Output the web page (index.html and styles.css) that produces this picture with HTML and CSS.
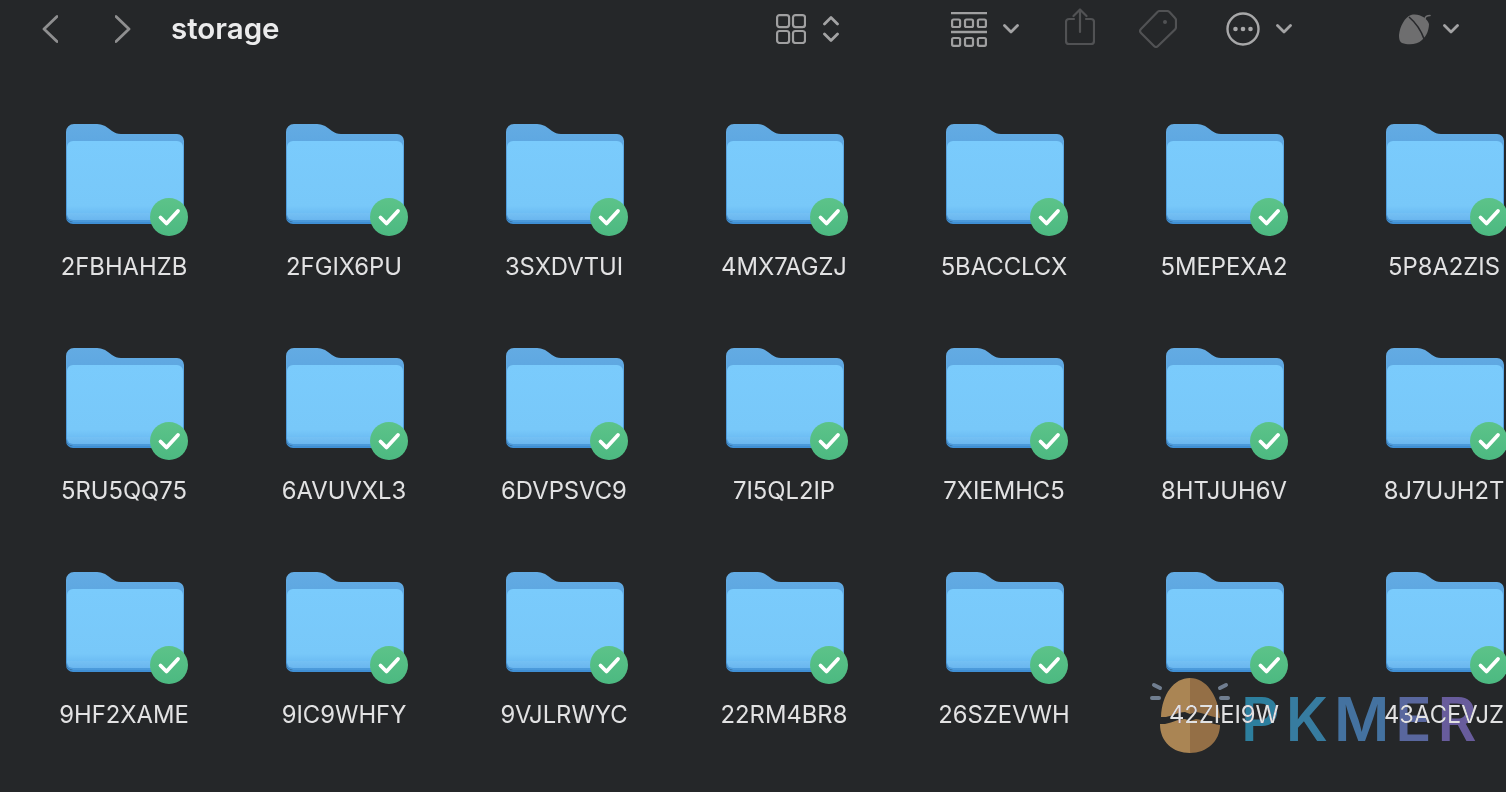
FILE: index.html
```html
<!DOCTYPE html>
<html lang="en">
<head>
  <meta charset="UTF-8" />
  <title>storage</title>
  <link rel="stylesheet" href="styles.css">
</head>
<body>

  <!-- shared icons -->
  <svg class="defs" aria-hidden="true">
    <defs>
      <linearGradient id="folderBack" x1="0" y1="0" x2="0" y2="1">
        <stop offset="0" stop-color="#63abe3"/>
        <stop offset="1" stop-color="#4b9adb"/>
      </linearGradient>
      <linearGradient id="folderFront" x1="0" y1="0" x2="0" y2="1">
        <stop offset="0" stop-color="#7acbfc"/>
        <stop offset="0.82" stop-color="#78c8f9"/>
        <stop offset="1" stop-color="#63b3ef"/>
      </linearGradient>
      <linearGradient id="checkFill" x1="0" y1="0" x2="0" y2="1">
        <stop offset="0" stop-color="#5cc389"/>
        <stop offset="1" stop-color="#4cb981"/>
      </linearGradient>
      <symbol id="folder" viewBox="0 0 118 100">
        <path d="M0 8a8 8 0 0 1 8-8h21c6 0 9 1 13 4l4 3c3 2 5 3 9 3h56a7 7 0 0 1 7 7v74a7 7 0 0 1-7 7H7a7 7 0 0 1-7-7z" fill="url(#folderBack)"/>
        <path d="M1 23a6 6 0 0 1 6-6h104a6 6 0 0 1 6 6v67a6 6 0 0 1-6 6H7a6 6 0 0 1-6-6z" fill="url(#folderFront)"/>
        <path d="M1 89h116v1a6 6 0 0 1-6 6H7a6 6 0 0 1-6-6z" fill="#fff" opacity="0.05"/>
        <path d="M0 91a7 7 0 0 0 7 7h104a7 7 0 0 0 7-7v2a7 7 0 0 1-7 7H7a7 7 0 0 1-7-7z" fill="#3f8fd4"/>
      </symbol>
      <symbol id="check" viewBox="0 0 38 38">
        <circle cx="19" cy="19" r="19" fill="url(#checkFill)"/>
        <path d="M10.500 19.500l6 6L28 13" fill="none" stroke="#fff" stroke-width="3.800" stroke-linecap="round" stroke-linejoin="round"/>
      </symbol>
      <symbol id="chevron" viewBox="0 0 16 10">
        <path d="M1.500 1.500L8 8l6.500-6.500" fill="none" stroke="#a3a3a4" stroke-width="2.800" stroke-linecap="round" stroke-linejoin="round"/>
      </symbol>
    </defs>
  </svg>

  <header class="toolbar">
    <svg class="nav-back" width="16" height="28" viewBox="0 0 16 28"><path d="M15 1.500L2 14l13 12.500" fill="none" stroke="#8f8f90" stroke-width="2.800" stroke-linecap="round" stroke-linejoin="round"/></svg>
    <svg class="nav-forward" width="16" height="28" viewBox="0 0 16 28"><path d="M1 1.500L14 14 1 26.500" fill="none" stroke="#8f8f90" stroke-width="2.800" stroke-linecap="round" stroke-linejoin="round"/></svg>
    <h1 class="title">storage</h1>

    <svg class="view-icon" width="30" height="30" viewBox="0 0 30 30" fill="none" stroke="#a0a0a1" stroke-width="2.200">
      <rect x="1.100" y="1.100" width="12" height="12" rx="2.500"/><rect x="17" y="1.100" width="12" height="12" rx="2.500"/>
      <rect x="1.100" y="17" width="12" height="12" rx="2.500"/><rect x="17" y="17" width="12" height="12" rx="2.500"/>
    </svg>
    <svg class="view-sort" width="16" height="28" viewBox="0 0 16 28" fill="none" stroke="#a3a3a4" stroke-width="2.800" stroke-linecap="round" stroke-linejoin="round">
      <path d="M1.500 9L8 2.500l6.500 6.500"/><path d="M1.500 19L8 25.500l6.500-6.500"/>
    </svg>

    <svg class="group-icon" width="36" height="35" viewBox="0 0 36 35" fill="none" stroke="#a0a0a1" stroke-width="2.200">
      <path d="M0 1.100h36M0 20h36" stroke-width="2.400"/>
      <rect x="1.100" y="7.500" width="8" height="7.500" rx="1.500"/><rect x="14" y="7.500" width="8" height="7.500" rx="1.500"/><rect x="26.900" y="7.500" width="8" height="7.500" rx="1.500"/>
      <rect x="1.100" y="26" width="8" height="7.800" rx="1.500"/><rect x="14" y="26" width="8" height="7.800" rx="1.500"/><rect x="26.900" y="26" width="8" height="7.800" rx="1.500"/>
    </svg>
    <svg class="chev chev-group" width="16" height="10"><use href="#chevron"/></svg>

    <svg class="share-icon" width="30" height="38" viewBox="0 0 30 38" fill="none" stroke="#515254" stroke-width="2.200" stroke-linecap="round" stroke-linejoin="round">
      <path d="M9 11H4a3 3 0 0 0-3 3v19a3 3 0 0 0 3 3h22a3 3 0 0 0 3-3V14a3 3 0 0 0-3-3h-5"/>
      <path d="M15 24V2M8.500 8L15 1.500 21.500 8"/>
    </svg>
    <svg class="tag-icon" width="38" height="38" viewBox="0 0 38 38" fill="none" stroke="#515254" stroke-width="2.200" stroke-linejoin="round">
      <path d="M18 2.500Q19 1 21 1h7q1.500 0 2.500 1l5.500 6q1 1 1 2.500V17q0 1.500-1 2.500L19 36q-2 2-4 0L2 23q-2-2 0-4z"/>
      <circle cx="26" cy="12" r="2" fill="#515254" stroke="none"/>
    </svg>

    <svg class="more-icon" width="34" height="34" viewBox="0 0 34 34">
      <circle cx="17" cy="17" r="15.500" fill="none" stroke="#a8a8a9" stroke-width="2.400"/>
      <circle cx="9.500" cy="17" r="2.300" fill="#a8a8a9"/><circle cx="17" cy="17" r="2.300" fill="#a8a8a9"/><circle cx="24.500" cy="17" r="2.300" fill="#a8a8a9"/>
    </svg>
    <svg class="chev chev-more" width="16" height="10"><use href="#chevron"/></svg>

    <svg class="acorn-icon" width="32" height="31" viewBox="0 0 32 31">
      <path d="M12 1C6 3 1 12 0 21c0 5 1 7 3 8 6 2 15 2 20-3 5-4 7-11 7-16-2-6-10-11-18-9z" fill="#6e6e6f"/>
      <path d="M10 3c6 5 12 13 15.500 23" fill="none" stroke="#27282b" stroke-width="1.600"/>
      <path d="M26 5c0-2 2-3.500 5-3.500" fill="none" stroke="#6e6e6f" stroke-width="1.600" stroke-linecap="round"/>
    </svg>
    <svg class="chev chev-acorn" width="16" height="10"><use href="#chevron"/></svg>
  </header>

  <main class="grid">
    <div class="item"><span class="icon"><svg class="folder"><use href="#folder"/></svg><svg class="badge"><use href="#check"/></svg></span><span class="name">2FBHAHZB</span></div>
    <div class="item"><span class="icon"><svg class="folder"><use href="#folder"/></svg><svg class="badge"><use href="#check"/></svg></span><span class="name">2FGIX6PU</span></div>
    <div class="item"><span class="icon"><svg class="folder"><use href="#folder"/></svg><svg class="badge"><use href="#check"/></svg></span><span class="name">3SXDVTUI</span></div>
    <div class="item"><span class="icon"><svg class="folder"><use href="#folder"/></svg><svg class="badge"><use href="#check"/></svg></span><span class="name">4MX7AGZJ</span></div>
    <div class="item"><span class="icon"><svg class="folder"><use href="#folder"/></svg><svg class="badge"><use href="#check"/></svg></span><span class="name">5BACCLCX</span></div>
    <div class="item"><span class="icon"><svg class="folder"><use href="#folder"/></svg><svg class="badge"><use href="#check"/></svg></span><span class="name">5MEPEXA2</span></div>
    <div class="item"><span class="icon"><svg class="folder"><use href="#folder"/></svg><svg class="badge"><use href="#check"/></svg></span><span class="name">5P8A2ZIS</span></div>

    <div class="item"><span class="icon"><svg class="folder"><use href="#folder"/></svg><svg class="badge"><use href="#check"/></svg></span><span class="name">5RU5QQ75</span></div>
    <div class="item"><span class="icon"><svg class="folder"><use href="#folder"/></svg><svg class="badge"><use href="#check"/></svg></span><span class="name">6AVUVXL3</span></div>
    <div class="item"><span class="icon"><svg class="folder"><use href="#folder"/></svg><svg class="badge"><use href="#check"/></svg></span><span class="name">6DVPSVC9</span></div>
    <div class="item"><span class="icon"><svg class="folder"><use href="#folder"/></svg><svg class="badge"><use href="#check"/></svg></span><span class="name">7I5QL2IP</span></div>
    <div class="item"><span class="icon"><svg class="folder"><use href="#folder"/></svg><svg class="badge"><use href="#check"/></svg></span><span class="name">7XIEMHC5</span></div>
    <div class="item"><span class="icon"><svg class="folder"><use href="#folder"/></svg><svg class="badge"><use href="#check"/></svg></span><span class="name">8HTJUH6V</span></div>
    <div class="item"><span class="icon"><svg class="folder"><use href="#folder"/></svg><svg class="badge"><use href="#check"/></svg></span><span class="name">8J7UJH2T</span></div>

    <div class="item"><span class="icon"><svg class="folder"><use href="#folder"/></svg><svg class="badge"><use href="#check"/></svg></span><span class="name">9HF2XAME</span></div>
    <div class="item"><span class="icon"><svg class="folder"><use href="#folder"/></svg><svg class="badge"><use href="#check"/></svg></span><span class="name">9IC9WHFY</span></div>
    <div class="item"><span class="icon"><svg class="folder"><use href="#folder"/></svg><svg class="badge"><use href="#check"/></svg></span><span class="name">9VJLRWYC</span></div>
    <div class="item"><span class="icon"><svg class="folder"><use href="#folder"/></svg><svg class="badge"><use href="#check"/></svg></span><span class="name">22RM4BR8</span></div>
    <div class="item"><span class="icon"><svg class="folder"><use href="#folder"/></svg><svg class="badge"><use href="#check"/></svg></span><span class="name">26SZEVWH</span></div>
    <div class="item"><span class="icon"><svg class="folder"><use href="#folder"/></svg><svg class="badge"><use href="#check"/></svg></span><span class="name">42ZIEI9W</span></div>
    <div class="item"><span class="icon"><svg class="folder"><use href="#folder"/></svg><svg class="badge"><use href="#check"/></svg></span><span class="name">43ACEVJZ</span></div>
  </main>

  <!-- watermark sits over the last row -->
  <div class="watermark">
    <svg class="egg" width="84" height="78" viewBox="0 0 84 78">
      <path d="M13 41C14 18 26 2 42 2c0 12 0 27 0 36l-5-2c-8 0-15 6-24 5z" fill="#c2975c"/>
      <path d="M42 2c16 0 28 17 30 40-9-1-16-5-24-6l-6 2z" fill="#a87d4b"/>
      <path d="M12 48c9 1 17-5 25-5l5 2v32C25 77 12 66 12 48z" fill="#c2975c"/>
      <path d="M42 45l6-2c8 1 15 5 24 6 0 16-13 28-30 28z" fill="#a87d4b"/>
      <path d="M6 9l6 3M4 22h7M78 9l-6 3M80 22h-7" stroke="#7e8ea2" stroke-width="4" stroke-linecap="round"/>
    </svg>
    <span class="wm-text"><span class="wm-p">P</span><span class="wm-k">K</span><span class="wm-m">M</span><span class="wm-e">E</span><span class="wm-r">R</span></span>
  </div>

</body>
</html>
```

FILE: styles.css
```css
/* Reset and Base */
* {
  box-sizing: border-box;
  margin: 0;
  padding: 0;
}

body {
  position: relative;
  width: 1506px;
  height: 792px;
  overflow: hidden;
  background: #252729;
  font-family: Inter, 'Noto Sans', sans-serif;
  color: #e2e2e3;
}

.defs {
  position: absolute;
  width: 0;
  height: 0;
}

/* Toolbar */
.toolbar {
  display: flex;
  align-items: center;
  height: 58px;
  padding-left: 42px;
}

.toolbar svg {
  flex: none;
}

.nav-forward { margin-left: 57px; }

.title {
  width: 110px;
  margin-left: 40px;
  margin-bottom: 2px;
  font-size: 29.500px;
  font-weight: 600;
  color: #ebebec;
}

.view-icon { margin-left: 495px; }
.view-sort { margin-left: 17px; }
.group-icon { margin-left: 112px; }
.chev-group { margin-left: 16px; }
.share-icon { margin-left: 46px; margin-bottom: 4px; }
.tag-icon { margin-left: 44px; }
.more-icon { margin-left: 49px; }
.chev-more { margin-left: 16px; }
.acorn-icon { margin-left: 107px; }
.chev-acorn { margin-left: 12px; }

/* Folder grid */
.grid {
  display: grid;
  grid-template-columns: repeat(7, 220px);
  grid-auto-rows: 224px;
  padding: 66px 0 0 14px;
}

.item {
  display: flex;
  flex-direction: column;
  align-items: center;
}

.icon {
  position: relative;
  display: block;
  width: 118px;
  height: 100px;
  margin-left: 2px;
}

.folder {
  display: block;
  width: 118px;
  height: 100px;
}

.badge {
  position: absolute;
  left: 84px;
  top: 74px;
  width: 38px;
  height: 38px;
}

.name {
  margin-top: 29px;
  font-size: 23.800px;
  line-height: 28px;
  white-space: nowrap;
}

/* Watermark */
.watermark {
  position: absolute;
  left: 1148px;
  top: 676px;
  display: flex;
  align-items: flex-start;
  opacity: 0.85;
  mix-blend-mode: lighten;
}

.wm-text {
  margin: 7px 0 0 9px;
  font-family: Inter, sans-serif;
  font-size: 60px;
  font-weight: 600;
  line-height: 72px;
  letter-spacing: 6px;
  white-space: nowrap;
}

.wm-p { color: #2f8fb3; }
.wm-k { color: #3a8cb5; }
.wm-m { color: #4a80b5; }
.wm-e { color: #6273b3; }
.wm-r { color: #7466b0; }
```
